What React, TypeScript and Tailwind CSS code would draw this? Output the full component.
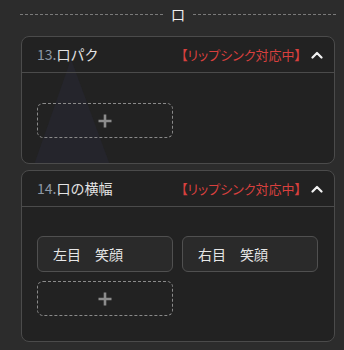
import React from 'react';

const font = { fontFamily: '"Noto Sans CJK JP", "Noto Sans", sans-serif' };

const Chevron = () => (
  <svg width="12" height="8" viewBox="0 0 12 8" className="shrink-0">
    <path d="M1.5 6.5 L6 2 L10.5 6.5" fill="none" stroke="#f2f2f2" strokeWidth="2.2" strokeLinecap="round" strokeLinejoin="round" />
  </svg>
);

const AddBox = () => (
  <div className="flex h-[35px] w-[136px] items-center justify-center rounded-md border border-dashed border-[#8a8a8a]">
    <svg width="14" height="14" viewBox="0 0 14 14">
      <path d="M7 0.5 V13.5 M0.5 7 H13.5" stroke="#8c8c8c" strokeWidth="2.6" />
    </svg>
  </div>
);

const CardHeader = ({ num, title }: { num: string; title: string }) => (
  <div className="flex h-[36px] items-center border-b border-[#4b4b4b] pl-[15px] pr-[11px] text-[14px]">
    <span className="text-[#8e98a5]">{num}</span>
    <span className="text-[#e4e4e4]">{title}</span>
    <span className="ml-auto mr-[10px] text-[13px] text-[#d8403e] [font-feature-settings:'palt']">
      【リップシンク対応中】
    </span>
    <Chevron />
  </div>
);

const Chip = ({ label }: { label: string }) => (
  <div className="flex h-[36px] w-[136px] items-center rounded-md border border-[#505050] bg-[#2a2a2a] pl-[15px] text-[14px] text-[#e6e6e6]">
    {label}
  </div>
);

export default function App() {
  return (
    <div className="h-[350px] w-[344px] overflow-hidden bg-[#2c2c2c]" style={font}>
      <div className="flex h-[24px] items-center pl-[20px] pr-[8px] pt-[4px]">
        <div className="flex-1 border-t border-dashed border-[#7a7a7a]" />
        <span className="px-[8px] text-[14px] leading-none text-[#f0f0f0]">口</span>
        <div className="flex-1 border-t border-dashed border-[#7a7a7a]" />
      </div>

      <div className="ml-[21px] mr-[9px] mt-[12px] flex flex-col gap-[6px]">
        <section className="relative overflow-hidden rounded-lg border border-[#4b4b4b] bg-[#222222]">
          <svg className="pointer-events-none absolute left-0 top-0" width="314" height="128">
            <polygon points="49,22 12,128 88,128" fill="#25252c" />
          </svg>
          <div className="relative">
            <CardHeader num="13." title="口パク" />
            <div className="pb-[25px] pl-[15px] pt-[30px]">
              <AddBox />
            </div>
          </div>
        </section>

        <section className="rounded-lg border border-[#4b4b4b] bg-[#222222]">
          <CardHeader num="14." title="口の横幅" />
          <div className="pb-[25px] pl-[15px] pt-[29px]">
            <div className="grid w-[281px] grid-cols-2 gap-[9px]">
              <Chip label="左目　笑顔" />
              <Chip label="右目　笑顔" />
              <AddBox />
            </div>
          </div>
        </section>
      </div>
    </div>
  );
}
